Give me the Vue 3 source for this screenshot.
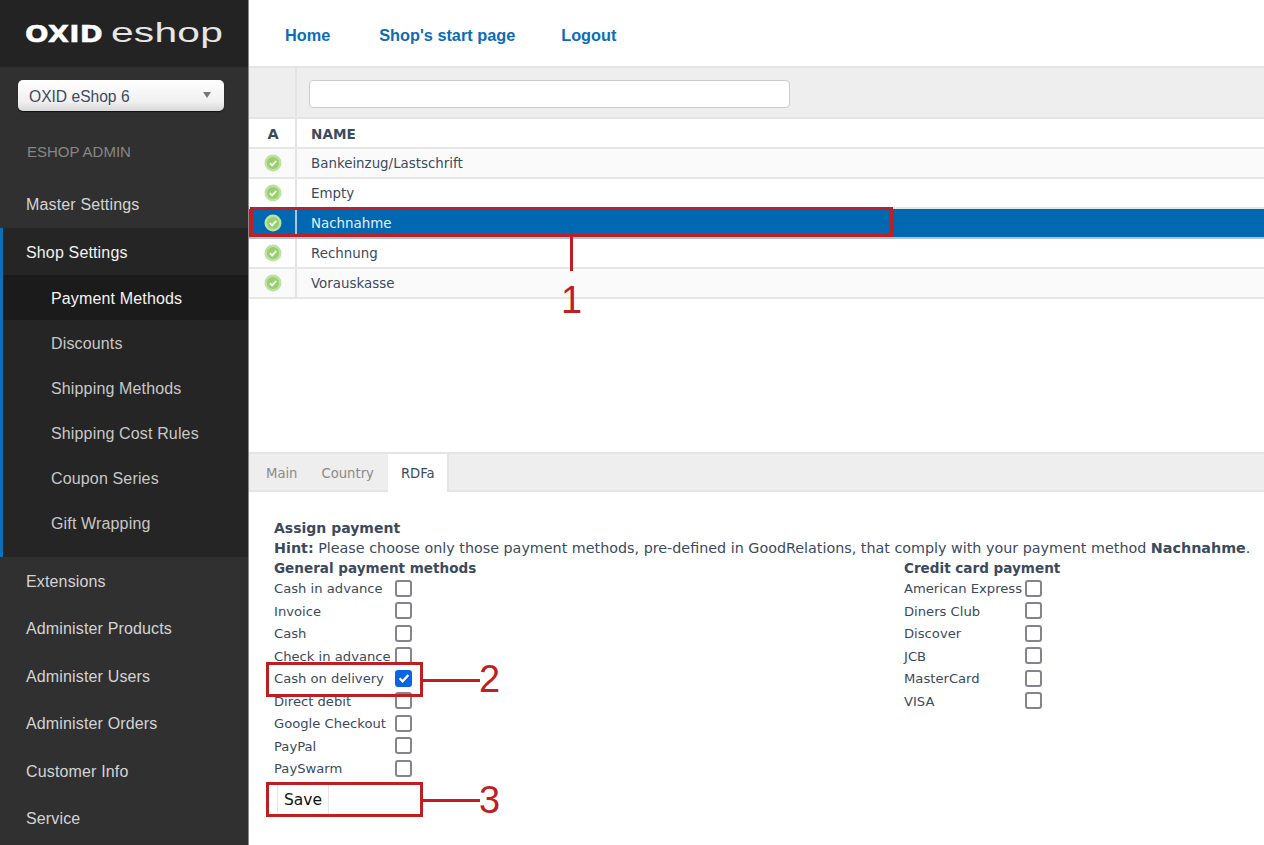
<script setup>
const sub = ['Discounts', 'Shipping Methods', 'Shipping Cost Rules', 'Coupon Series', 'Gift Wrapping']
const lower = ['Extensions', 'Administer Products', 'Administer Users', 'Administer Orders', 'Customer Info', 'Service']
const rows = [
  { name: 'Bankeinzug/Lastschrift', alt: true },
  { name: 'Empty' },
  { name: 'Nachnahme', selected: true },
  { name: 'Rechnung' },
  { name: 'Vorauskasse', alt: true }
]
const general = [
  { label: 'Cash in advance' }, { label: 'Invoice' }, { label: 'Cash' }, { label: 'Check in advance' },
  { label: 'Cash on delivery', checked: true }, { label: 'Direct debit' }, { label: 'Google Checkout' },
  { label: 'PayPal' }, { label: 'PaySwarm' }
]
const cards = ['American Express', 'Diners Club', 'Discover', 'JCB', 'MasterCard', 'VISA'].map(label => ({ label }))
</script>

<template>
  <div class="page">
    <aside class="side">
      <div class="logo">
        <svg class="mark-logo" width="205" height="44" viewBox="0 0 205 44">
          <text x="0" y="25" class="lg-a" textLength="78" lengthAdjust="spacingAndGlyphs">OXID</text>
          <text x="86" y="25" class="lg-b" textLength="112" lengthAdjust="spacingAndGlyphs">eshop</text>
        </svg>
      </div>
      <div class="shop">
        <div class="select">
          <span>OXID eShop 6</span>
          <i class="caret"></i>
        </div>
      </div>
      <div class="admin">ESHOP ADMIN</div>
      <div class="item">Master Settings</div>
      <div class="group">
        <div class="item open">Shop Settings</div>
        <div class="subitem current">Payment Methods</div>
        <div v-for="s in sub" :key="s" class="subitem">{{ s }}</div>
      </div>
      <div class="lower">
        <div v-for="l in lower" :key="l" class="item">{{ l }}</div>
      </div>
    </aside>

    <main class="main">
      <nav class="top">
        <a>Home</a>
        <a>Shop's start page</a>
        <a>Logout</a>
      </nav>

      <section class="list">
        <div class="filter">
          <div class="c-a"></div>
          <div class="c-b"><div class="input"></div></div>
        </div>
        <div class="row head">
          <div class="c-a">A</div>
          <div class="c-b">NAME</div>
        </div>
        <div v-for="r in rows" :key="r.name" class="row" :class="{ sel: r.selected, alt: r.alt }">
          <div class="c-a">
            <svg width="18" height="18" viewBox="0 0 18 18">
              <circle cx="9" cy="9" r="8.5" fill="#bde2a0" />
              <circle cx="9" cy="9" r="6" fill="#97ce70" />
              <path d="M5.8 9.2l2.3 2.3 4.2-4.6" fill="none" stroke="#f4faef" stroke-width="1.9" />
            </svg>
          </div>
          <div class="c-b">{{ r.name }}</div>
        </div>
      </section>

      <section class="detail">
        <div class="tabs">
          <span class="tab">Main</span>
          <span class="tab">Country</span>
          <span class="tab on">RDFa</span>
        </div>
        <div class="body">
          <div class="b first">Assign payment</div>
          <div class="hint"><b>Hint:</b> Please choose only those payment methods, pre-defined in GoodRelations, that comply with your payment method <b>Nachnahme</b>.</div>
          <div class="cols">
            <div class="col">
              <div class="b">General payment methods</div>
              <div v-for="o in general" :key="o.label" class="opt">
                <span class="lab">{{ o.label }}</span>
                <span class="box" :class="{ on: o.checked }">
                  <svg v-if="o.checked" width="14" height="14" viewBox="0 0 14 14"><path d="M2.6 7.3l3 3 5.8-6.4" fill="none" stroke="#fff" stroke-width="2.2" /></svg>
                </span>
              </div>
              <button class="save">Save</button>
            </div>
            <div class="col">
              <div class="b">Credit card payment</div>
              <div v-for="o in cards" :key="o.label" class="opt">
                <span class="lab">{{ o.label }}</span>
                <span class="box"></span>
              </div>
            </div>
          </div>
        </div>
      </section>
    </main>

    <div class="mark m1"></div>
    <div class="mark m2"></div>
    <div class="mark m3"></div>
    <div class="line l1"></div>
    <div class="line l2"></div>
    <div class="line l3"></div>
    <div class="num n1">1</div>
    <div class="num n2">2</div>
    <div class="num n3">3</div>
  </div>
</template>

<style>
html, body { margin: 0; background: #fff; overflow: hidden; }
</style>

<style scoped>
.page {
  position: relative;
  display: flex;
  width: 1264px;
  height: 845px;
  overflow: hidden;
  font-family: "DejaVu Sans", sans-serif;
}
.side {
  width: 248px;
  flex: none;
  background: #303030;
  color: #d4d4d4;
  font-family: "Liberation Sans", sans-serif;
  font-size: 16px;
  letter-spacing: 0.15px;
  border-right: 1px solid #8a8a8a;
}
.logo {
  height: 67px;
  background: #232323;
  box-sizing: border-box;
  padding: 17px 0 0 25px;
}
.mark-logo { display: block; overflow: visible; }
.lg-a { font: bold 23.5px "DejaVu Sans", sans-serif; fill: #fff; stroke: #fff; stroke-width: 0.4px; }
.lg-b { font: 27.5px "Liberation Sans", sans-serif; fill: #e6e6e6; }
.shop { padding: 13px 24px 0 18px; }
.select {
  height: 31px;
  box-sizing: border-box;
  border-radius: 5px;
  background: linear-gradient(#fff, #f0f0f0 70%, #d8d8d8);
  box-shadow: 0 1px 1px #111;
  padding: 3px 13px 0 11px;
  display: flex;
  align-items: center;
  justify-content: space-between;
  color: #3c4a5e;
  font-size: 15.6px;
  letter-spacing: 0;
}
.caret {
  border: 4.5px solid transparent;
  border-top: 6.5px solid #777;
  border-bottom: 0;
  margin-top: -4px;
}
.admin {
  color: #878787;
  font-size: 15px;
  letter-spacing: 0;
  padding: 32px 0 0 27px;
  height: 37.25px;
  line-height: 18px;
}
.item {
  height: 47.5px;
  line-height: 49.5px;
  padding-left: 26px;
}
.group {
  background: #252525;
  border-left: 3px solid #0d6fb8;
  height: 329px;
}
.group .item { padding-left: 23px; color: #f2f2f2; }
.subitem {
  height: 45px;
  line-height: 47px;
  padding-left: 48px;
  color: #c8c8c8;
}
.subitem.current { background: #1b1b1b; color: #f4f4f4; }

.main { flex: 1; min-width: 0; color: #3c4a5e; font-size: 13.4px; }
.top {
  height: 66px;
  box-sizing: border-box;
  display: flex;
  align-items: center;
  padding: 4px 0 0 36px;
  font: bold 16.3px "Liberation Sans", sans-serif;
  color: #0d6cb5;
}
.top a:nth-child(2) { margin-left: 49px; }
.top a:nth-child(3) { margin-left: 46px; }

.list { height: 386px; border-top: 2px solid #e4e4e4; box-sizing: border-box; }
.filter { display: flex; height: 49px; background: #eee; border-bottom: 2px solid #e4e4e4; }
.c-a { flex: none; display: flex; align-items: center; justify-content: center; padding-left: 2px; box-sizing: border-box; width: 48px; border-right: 2px solid #e4e4e4; }
.c-b { flex: 1; padding-left: 14px; display: flex; align-items: center; }
.filter .c-b { padding: 3px 0 0 12px; }
.input {
  width: 479px;
  height: 26px;
  background: #fff;
  border: 1px solid #ccc;
  border-radius: 4px;
}
.row { display: flex; height: 28px; border-bottom: 2px solid #e6e6e6; }
.row.alt { background: #fafafa; }
.row.head { font-weight: bold; font-size: 13.6px; }
.row.head > div { padding-top: 2px; }
.row.head .c-a { font-size: 14.5px; }
.row.sel { background: #0067b1; color: #e8f2fa; border-bottom-color: #a9c4da; }
.row.sel .c-a { border-right-color: #a9c7e0; }

.tabs {
  height: 36px;
  display: flex;
  background: #eee;
  border-top: 2px solid #e4e4e4;
  border-bottom: 2px solid #e4e4e4;
}
.tab { padding: 0 7px 0 17px; line-height: 40px; color: #8a8a8a; font-size: 13.2px; }
.tab:nth-child(2) { padding: 0 14px 0 17px; }
.tab.on {
  padding: 0 12px 0 13px;
  background: #fff;
  color: #3c4a5e;
  border-right: 2px solid #e4e4e4;
  height: 38px;
}
.body { padding: 26px 0 0 25px; line-height: 20px; }
.b { font-weight: bold; font-size: 13.55px; margin-bottom: -1px; }
.b.first { font-size: 14px; margin-bottom: 0; }
.hint { white-space: nowrap; font-size: 14.32px; }
.cols { display: flex; }
.col { width: 630px; }
.col + .col { width: auto; }
.opt { display: flex; align-items: center; height: 22.5px; font-size: 13.15px; }
.lab { width: 121px; flex: none; white-space: nowrap; padding-top: 2px; }
.box {
  width: 17px;
  height: 17px;
  box-sizing: border-box;
  border: 2px solid #84848f;
  border-radius: 3px;
  background: #fff;
  display: flex;
  align-items: center;
  justify-content: center;
}
.box.on { background: #0b63e5; border-color: #0b63e5; }
.box svg { flex: none; }
.save {
  display: block;
  margin: 2px 0 0 3px;
  height: 34px;
  width: 52px;
  padding: 2px 0 0;
  background: #fff;
  border: 1px solid #e6e6e6;
  border-radius: 3px;
  color: #111;
  font: 15.5px "DejaVu Sans", sans-serif;
}

.mark { position: absolute; box-sizing: border-box; border: 3px solid #bf1e23; }
.m1 { left: 250px; top: 207px; width: 643px; height: 30px; }
.m2 { left: 266px; top: 662px; width: 157px; height: 35px; }
.m3 { left: 266px; top: 782px; width: 157px; height: 35px; }
.line { position: absolute; background: #bf1e23; }
.l1 { left: 570px; top: 237px; width: 3px; height: 34px; }
.l2 { left: 423px; top: 679px; width: 57px; height: 3px; }
.l3 { left: 423px; top: 799px; width: 57px; height: 3px; }
.num {
  position: absolute;
  color: #bf1e23;
  font: 38px/40px "Liberation Sans", sans-serif;
}
.n1 { left: 561px; top: 280px; }
.n2 { left: 479px; top: 659px; }
.n3 { left: 479px; top: 780px; }
</style>
